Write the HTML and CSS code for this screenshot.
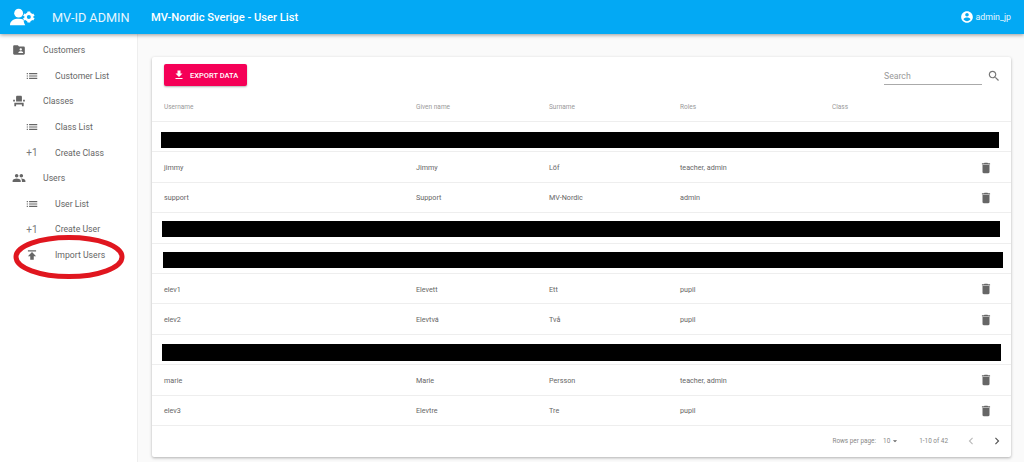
FILE: index.html
```html
<!DOCTYPE html>
<html lang="en">
<head>
  <meta charset="UTF-8">
  <title>MV-ID Admin</title>
  <link rel="stylesheet" href="styles.css">
</head>
<body>
  <svg class="sprite">
    <symbol id="i-folder" viewBox="0 0 24 24"><path d="M20 6h-8l-2-2H4c-1.1 0-1.99.9-1.99 2L2 18c0 1.1.9 2 2 2h16c1.1 0 2-.9 2-2V8c0-1.1-.9-2-2-2zm-5 3c1.1 0 2 .9 2 2s-.9 2-2 2-2-.9-2-2 .9-2 2-2zm4 8h-8v-1c0-1.33 2.67-2 4-2s4 .67 4 2v1z"/></symbol>
    <symbol id="i-list" viewBox="0 0 24 24"><path d="M3 13h2v-2H3v2zm0 4h2v-2H3v2zm0-8h2V7H3v2zm4 4h14v-2H7v2zm0 4h14v-2H7v2zM7 7v2h14V7H7z"/></symbol>
    <symbol id="i-seat" viewBox="0 0 24 24"><path d="M4 18v3h3v-3h10v3h3v-6H4zm15-8h3v3h-3zM2 10h3v3H2zm15 3H7V5c0-1.1.9-2 2-2h6c1.1 0 2 .9 2 2v8z"/></symbol>
    <symbol id="i-people" viewBox="0 0 24 24"><path d="M16 11c1.66 0 2.99-1.34 2.99-3S17.66 5 16 5c-1.66 0-3 1.34-3 3s1.34 3 3 3zm-8 0c1.66 0 2.99-1.34 2.99-3S9.66 5 8 5C6.34 5 5 6.34 5 8s1.34 3 3 3zm0 2c-2.33 0-7 1.17-7 3.5V19h14v-2.5c0-2.33-4.67-3.5-7-3.5zm8 0c-.29 0-.62.02-.97.05 1.16.84 1.97 1.97 1.97 3.45V19h6v-2.5c0-2.33-4.67-3.5-7-3.5z"/></symbol>
    <symbol id="i-publish" viewBox="0 0 24 24"><path d="M5 4v2h14V4H5zm0 10h4v6h6v-6h4l-7-7-7 7z"/></symbol>
    <symbol id="i-delete" viewBox="0 0 24 24"><path d="M6 19c0 1.1.9 2 2 2h8c1.1 0 2-.9 2-2V7H6v12zM19 4h-3.5l-1-1h-5l-1 1H5v2h14V4z"/></symbol>
    <symbol id="i-account" viewBox="0 0 24 24"><path d="M12 2C6.48 2 2 6.48 2 12s4.48 10 10 10 10-4.48 10-10S17.52 2 12 2zm0 3c1.66 0 3 1.34 3 3s-1.34 3-3 3-3-1.34-3-3 1.34-3 3-3zm0 14.2c-2.5 0-4.71-1.28-6-3.22.03-1.99 4-3.08 6-3.08 1.99 0 5.97 1.09 6 3.08-1.29 1.94-3.5 3.22-6 3.22z"/></symbol>
    <symbol id="i-search" viewBox="0 0 24 24"><path d="M15.5 14h-.79l-.28-.27C15.41 12.59 16 11.11 16 9.5 16 5.91 13.09 3 9.5 3S3 5.91 3 9.5 5.91 16 9.5 16c1.61 0 3.09-.59 4.23-1.57l.27.28v.79l5 4.99L20.49 19l-4.99-5zm-6 0C7.01 14 5 11.99 5 9.5S7.01 5 9.5 5 14 7.01 14 9.5 11.99 14 9.5 14z"/></symbol>
    <symbol id="i-download" viewBox="0 0 24 24"><path d="M19 9h-4V3H9v6H5l7 7 7-7zM5 18v2h14v-2H5z"/></symbol>
    <symbol id="i-prev" viewBox="0 0 24 24"><path d="M15.41 7.41L14 6l-6 6 6 6 1.41-1.41L10.83 12z"/></symbol>
    <symbol id="i-next" viewBox="0 0 24 24"><path d="M10 6L8.59 7.41 13.17 12l-4.58 4.59L10 18l6-6z"/></symbol>
    <symbol id="i-drop" viewBox="0 0 24 24"><path d="M7 10l5 5 5-5z"/></symbol>
  </svg>

  <header class="topbar">
    <svg class="logo" viewBox="0 0 26 18">
      <circle cx="9" cy="5" r="4.6"/>
      <path d="M0 17.5c0-4.6 4.2-6.6 9-6.6 2 0 3.8.3 5.3 1-.3 1.8.3 3.6 1.6 5.6z"/>
      <circle cx="19.6" cy="9" r="3.4" fill="none" stroke="#fff" stroke-width="2.6"/>
      <path d="M18.2 3.2h2.8l.3 1.8h-3.4zM18.2 14.8h2.8l.3-1.8h-3.4zM13.6 7.6l1.4-2.3 1.7.9-1.6 2.3zM25.6 7.6l-1.4-2.3-1.7.9 1.6 2.3zM13.6 10.4l1.4 2.3 1.7-.9-1.6-2.3zM25.6 10.4l-1.4 2.3-1.7-.9 1.6-2.3z"/>
    </svg>
    <span class="brand">MV-ID ADMIN</span>
    <span class="page-title">MV-Nordic Sverige - User List</span>
    <span class="account">
      <svg class="icon-account"><use href="#i-account"/></svg>
      admin_jp
    </span>
  </header>

  <div class="layout">
    <nav class="sidebar">
      <a class="nav-item"><svg class="nav-icon"><use href="#i-folder"/></svg>Customers</a>
      <a class="nav-item sub"><svg class="nav-icon"><use href="#i-list"/></svg>Customer List</a>
      <a class="nav-item"><svg class="nav-icon"><use href="#i-seat"/></svg>Classes</a>
      <a class="nav-item sub"><svg class="nav-icon"><use href="#i-list"/></svg>Class List</a>
      <a class="nav-item sub"><span class="plus">+1</span>Create Class</a>
      <a class="nav-item"><svg class="nav-icon"><use href="#i-people"/></svg>Users</a>
      <a class="nav-item sub"><svg class="nav-icon"><use href="#i-list"/></svg>User List</a>
      <a class="nav-item sub"><span class="plus">+1</span>Create User</a>
      <a class="nav-item sub"><svg class="nav-icon"><use href="#i-publish"/></svg>Import Users</a>
    </nav>

    <main class="content">
      <section class="card">
        <div class="toolbar">
          <button class="export"><svg class="export-icon"><use href="#i-download"/></svg>EXPORT DATA</button>
          <div class="search">
            <span class="search-field">Search</span>
            <svg class="search-icon"><use href="#i-search"/></svg>
          </div>
        </div>

        <div class="row head">
          <span class="c1">Username</span><span class="c2">Given name</span><span class="c3">Surname</span><span class="c4">Roles</span><span class="c5">Class</span>
        </div>

        <div class="row masked"><div class="bar bar-a"></div></div>
        <div class="row">
          <span class="c1">jimmy</span><span class="c2">Jimmy</span><span class="c3">Löf</span><span class="c4">teacher, admin</span><span class="c5"></span>
          <svg class="del"><use href="#i-delete"/></svg>
        </div>
        <div class="row">
          <span class="c1">support</span><span class="c2">Support</span><span class="c3">MV-Nordic</span><span class="c4">admin</span><span class="c5"></span>
          <svg class="del"><use href="#i-delete"/></svg>
        </div>
        <div class="row masked"><div class="bar bar-b"></div></div>
        <div class="row masked"><div class="bar bar-c"></div></div>
        <div class="row">
          <span class="c1">elev1</span><span class="c2">Elevett</span><span class="c3">Ett</span><span class="c4">pupil</span><span class="c5"></span>
          <svg class="del"><use href="#i-delete"/></svg>
        </div>
        <div class="row">
          <span class="c1">elev2</span><span class="c2">Elevtvá</span><span class="c3">Två</span><span class="c4">pupil</span><span class="c5"></span>
          <svg class="del"><use href="#i-delete"/></svg>
        </div>
        <div class="row masked"><div class="bar bar-d"></div></div>
        <div class="row">
          <span class="c1">marie</span><span class="c2">Marie</span><span class="c3">Persson</span><span class="c4">teacher, admin</span><span class="c5"></span>
          <svg class="del"><use href="#i-delete"/></svg>
        </div>
        <div class="row">
          <span class="c1">elev3</span><span class="c2">Elevtre</span><span class="c3">Tre</span><span class="c4">pupil</span><span class="c5"></span>
          <svg class="del"><use href="#i-delete"/></svg>
        </div>

        <div class="pager">
          <span class="per-page">Rows per page:</span>
          <span class="per-value">10<svg class="drop"><use href="#i-drop"/></svg></span>
          <span class="range">1-10 of 42</span>
          <svg class="page-btn off"><use href="#i-prev"/></svg>
          <svg class="page-btn"><use href="#i-next"/></svg>
        </div>
      </section>
    </main>
  </div>

  <svg class="circled" viewBox="0 0 116 48">
    <ellipse cx="57" cy="24" rx="53" ry="19.5"/>
  </svg>
</body>
</html>
```

FILE: styles.css
```css
*{box-sizing:border-box;}
html,body{height:100%;}
body{margin:0;height:462px;overflow:hidden;font-family:Roboto,"Liberation Sans",sans-serif;color:#555;background:#fafafa;}
.sprite{width:0;height:0;position:absolute;}

.topbar{height:34px;background:#03a9f4;color:#fff;display:flex;align-items:center;padding-left:10px;box-shadow:0 1px 4px rgba(0,0,0,.4);position:relative;}
.logo{width:25px;height:18px;fill:#fff;margin-right:17px;}
.brand{font-size:12.7px;width:99px;color:#e6f6fe;}
.page-title{font-size:11.2px;font-weight:500;}
.account{margin-left:auto;margin-right:13px;font-size:8.8px;display:flex;align-items:center;gap:2px;color:#e6f6fe;}
.icon-account{width:14px;height:14px;fill:#fff;}

.layout{display:flex;height:428px;}
.sidebar{width:138px;background:#fff;border-right:1px solid #eee;padding-top:3.4px;}
.nav-item{height:25.6px;display:flex;align-items:center;font-size:8.7px;color:#666;padding-left:12px;}
.nav-item.sub{padding-left:25px;}
.nav-icon{width:14px;height:14px;fill:#666;margin-right:17px;flex:none;}
.nav-item.sub .nav-icon{margin-right:16px;}
.plus{width:14px;margin-right:16px;font-size:10px;text-align:center;color:#777;}

.content{flex:1;padding:23px 13px 0 14px;}
.card{background:#fff;height:400px;border-radius:2px;box-shadow:0 1px 3px rgba(0,0,0,.3);}
.toolbar{height:38px;display:flex;align-items:flex-start;justify-content:space-between;padding:7px 10px 0 12px;}
.export{height:22px;width:83px;background:#f50057;color:#fff;border:none;border-radius:2px;padding:0 0 0 9px;display:flex;align-items:center;gap:5px;font:500 7.5px Roboto,sans-serif;box-shadow:0 1px 2px rgba(0,0,0,.3);}
.export-icon{width:12px;height:12px;fill:#fff;}
.search{display:flex;align-items:center;gap:5px;margin-top:2px;}
.search-field{width:98px;height:19px;line-height:20px;font-size:8.7px;color:#999;border-bottom:1px solid #aaa;}
.search-icon{width:14px;height:14px;fill:#777;}

.row{height:30.4px;display:flex;align-items:center;padding:1px 0 0 12px;font-size:7.2px;color:#666;border-bottom:1px solid #eee;}
.row.head{height:27px;font-size:6.5px;color:#999;align-items:flex-start;padding-top:8px;}
.c1{width:252px;}
.c2{width:133px;}
.c3{width:131px;}
.c4{width:152px;}
.c5{width:146px;}
.del{width:14px;height:14px;fill:#666;flex:none;margin-left:1px;}
.masked{align-items:flex-start;padding:0;}

/* redaction bars, hand drawn so none of them line up */
.bar{background:#000;height:16px;}
.bar-a{width:838px;margin:10px 0 0 9px;}
.bar-b{width:838px;margin:8px 0 0 10px;}
.bar-c{width:840px;margin:8px 0 0 11px;}
.bar-d{width:839px;margin:9px 0 0 10px;height:17px;}

.pager{height:31px;display:flex;align-items:center;justify-content:flex-end;font-size:6.4px;color:#888;padding-right:7px;}
.per-value{display:flex;align-items:center;margin:0 19px 0 7px;}
.drop{width:10px;height:10px;fill:#666;}
.page-btn{width:14px;height:14px;fill:#555;margin-left:12px;}
.page-btn.off{fill:#bbb;margin-left:16px;}

/* hand drawn marker ring over the sidebar */
.circled{position:absolute;left:12px;top:233px;width:116px;height:48px;fill:none;stroke:#e0161f;stroke-width:5;}
```
